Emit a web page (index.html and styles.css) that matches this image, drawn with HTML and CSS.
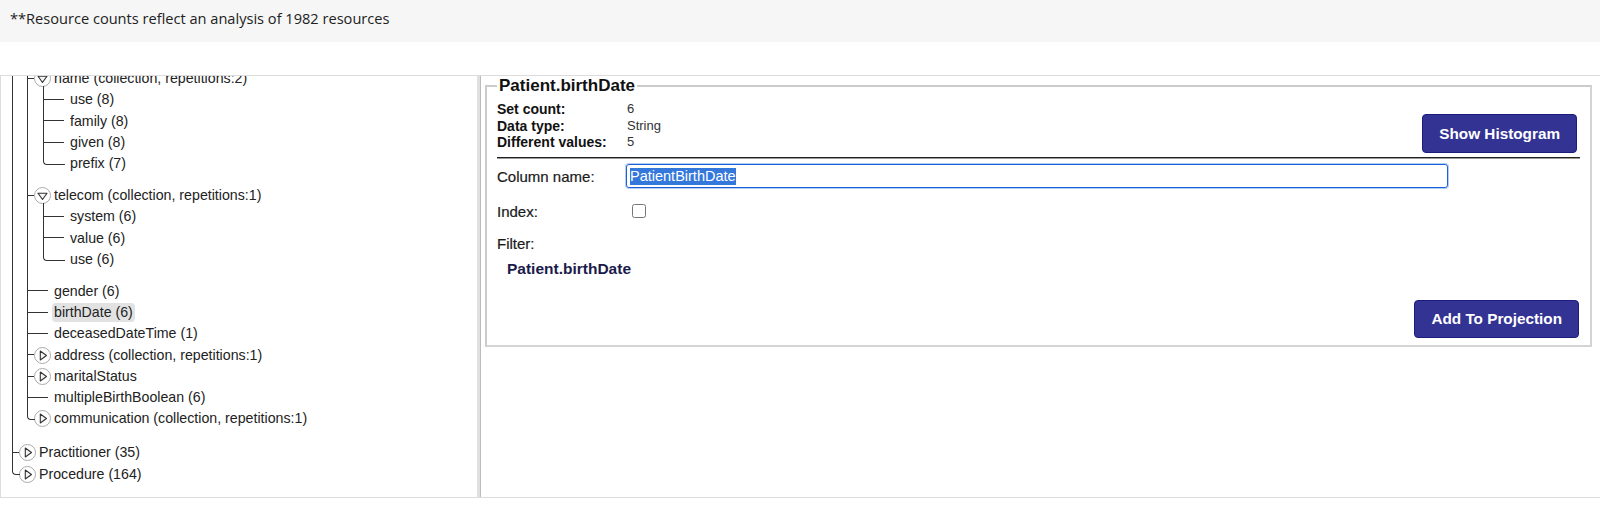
FILE: index.html
```html
<!DOCTYPE html>
<html lang="en">
<head>
<meta charset="utf-8">
<title>Resource analysis</title>
<link rel="stylesheet" href="styles.css">
</head>
<body>
<div class="notice">**Resource counts reflect an analysis of 1982 resources</div>
<div class="workspace">
  <div class="tree-pane">
    <ul class="tree">
      <li class="node hidden-row">
        <ul class="children l1">
          <li class="node open">
            <div class="row"><svg class="toggle" viewBox="0 0 17 17" width="17" height="17"><circle cx="8.5" cy="8.5" r="8" fill="#fff" stroke="#aaa"/><polygon points="4,6.2 13,6.2 8.5,12.5" fill="#f4f4f4" stroke="#333" stroke-width="1.1" stroke-linejoin="round"/></svg><span class="label">name (collection, repetitions:2)</span></div>
            <ul class="children l2">
              <li class="leaf"><div class="row"><span class="label">use (8)</span></div></li>
              <li class="leaf"><div class="row"><span class="label">family (8)</span></div></li>
              <li class="leaf"><div class="row"><span class="label">given (8)</span></div></li>
              <li class="leaf last"><div class="row"><span class="label">prefix (7)</span></div></li>
            </ul>
          </li>
          <li class="node open">
            <div class="row"><svg class="toggle" viewBox="0 0 17 17" width="17" height="17"><circle cx="8.5" cy="8.5" r="8" fill="#fff" stroke="#aaa"/><polygon points="4,6.2 13,6.2 8.5,12.5" fill="#f4f4f4" stroke="#333" stroke-width="1.1" stroke-linejoin="round"/></svg><span class="label">telecom (collection, repetitions:1)</span></div>
            <ul class="children l2">
              <li class="leaf"><div class="row"><span class="label">system (6)</span></div></li>
              <li class="leaf"><div class="row"><span class="label">value (6)</span></div></li>
              <li class="leaf last"><div class="row"><span class="label">use (6)</span></div></li>
            </ul>
          </li>
          <li class="leaf"><div class="row"><span class="label">gender (6)</span></div></li>
          <li class="leaf"><div class="row"><span class="label selected">birthDate (6)</span></div></li>
          <li class="leaf"><div class="row"><span class="label">deceasedDateTime (1)</span></div></li>
          <li class="node"><div class="row"><svg class="toggle" viewBox="0 0 17 17" width="17" height="17"><circle cx="8.5" cy="8.5" r="8" fill="#fff" stroke="#aaa"/><polygon points="6.3,4 12.5,8.5 6.3,13" fill="#f4f4f4" stroke="#333" stroke-width="1.1" stroke-linejoin="round"/></svg><span class="label">address (collection, repetitions:1)</span></div></li>
          <li class="node"><div class="row"><svg class="toggle" viewBox="0 0 17 17" width="17" height="17"><circle cx="8.5" cy="8.5" r="8" fill="#fff" stroke="#aaa"/><polygon points="6.3,4 12.5,8.5 6.3,13" fill="#f4f4f4" stroke="#333" stroke-width="1.1" stroke-linejoin="round"/></svg><span class="label">maritalStatus</span></div></li>
          <li class="leaf"><div class="row"><span class="label">multipleBirthBoolean (6)</span></div></li>
          <li class="node last"><div class="row"><svg class="toggle" viewBox="0 0 17 17" width="17" height="17"><circle cx="8.5" cy="8.5" r="8" fill="#fff" stroke="#aaa"/><polygon points="6.3,4 12.5,8.5 6.3,13" fill="#f4f4f4" stroke="#333" stroke-width="1.1" stroke-linejoin="round"/></svg><span class="label">communication (collection, repetitions:1)</span></div></li>
        </ul>
      </li>
      <li class="node"><div class="row"><svg class="toggle" viewBox="0 0 17 17" width="17" height="17"><circle cx="8.5" cy="8.5" r="8" fill="#fff" stroke="#aaa"/><polygon points="6.3,4 12.5,8.5 6.3,13" fill="#f4f4f4" stroke="#333" stroke-width="1.1" stroke-linejoin="round"/></svg><span class="label">Practitioner (35)</span></div></li>
      <li class="node last"><div class="row"><svg class="toggle" viewBox="0 0 17 17" width="17" height="17"><circle cx="8.5" cy="8.5" r="8" fill="#fff" stroke="#aaa"/><polygon points="6.3,4 12.5,8.5 6.3,13" fill="#f4f4f4" stroke="#333" stroke-width="1.1" stroke-linejoin="round"/></svg><span class="label">Procedure (164)</span></div></li>
    </ul>
  </div>
  <div class="splitter"></div>
  <div class="detail-pane">
    <fieldset class="detail">
      <legend class="detail-title">Patient.birthDate</legend>
      <div class="summary">
        <dl class="stats">
          <dt>Set count:</dt><dd>6</dd>
          <dt>Data type:</dt><dd>String</dd>
          <dt>Different values:</dt><dd>5</dd>
        </dl>
        <button class="btn btn-histogram" type="button">Show Histogram</button>
      </div>
      <hr class="divider">
      <div class="field field-name">
        <span class="field-label">Column name:</span>
        <div class="text-input"><span class="text-selection">PatientBirthDate</span></div>
      </div>
      <div class="field field-index">
        <span class="field-label">Index:</span>
        <input class="checkbox" type="checkbox">
      </div>
      <div class="field field-filter">
        <span class="field-label">Filter:</span>
      </div>
      <div class="filter-value">Patient.birthDate</div>
      <div class="actions">
        <button class="btn btn-add" type="button">Add To Projection</button>
      </div>
    </fieldset>
  </div>
</div>
</body>
</html>
```

FILE: styles.css
```css
* { box-sizing: border-box; }

html, body {
  margin: 0;
  padding: 0;
  background: #fff;
  height: 505px;
  overflow: hidden;
}

body {
  font-family: "Liberation Sans", Arial, sans-serif;
  color: #222;
}

.notice {
  height: 42px;
  background: #f6f6f6;
  padding: 8px 0 0 10px;
  font-family: "Open Sans", "Liberation Sans", sans-serif;
  font-size: 14.6px;
  line-height: 20px;
  color: #222;
}

.workspace {
  margin-top: 33px;
  height: 423px;
  display: flex;
  border-top: 1px solid #dcdcdc;
  border-bottom: 1px solid #dcdcdc;
}

/* ---------- tree ---------- */
.tree-pane {
  width: 477px;
  flex: none;
  border-left: 1px solid #dcdcdc;
  overflow: hidden;
  font-size: 14.2px;
  color: #222;
}

.tree,
.children {
  list-style: none;
  margin: 0;
  padding: 0;
}

.tree {
  padding-left: 11px;
  margin-top: -8.2px;
}

.children.l1 {
  padding-left: 15px;
  padding-bottom: 12.5px;
}

.children.l2 {
  padding-left: 16px;
  padding-bottom: 10.5px;
}

.tree li {
  position: relative;
}

.tree li::before {
  content: "";
  position: absolute;
  left: 0;
  top: 0;
  bottom: 0;
  border-left: 1px solid #333;
}

.tree li::after {
  content: "";
  position: absolute;
  left: 0;
  top: 10px;
  width: 7px;
  border-top: 1px solid #333;
}

.tree li.leaf::after {
  width: 21px;
}

.children.l2 > li:first-child::before {
  top: -3px;
}

.tree li.last::before {
  bottom: auto;
  height: 11px;
  width: 7px;
  border-bottom: 1px solid #333;
  border-bottom-left-radius: 4px;
}

.tree li.leaf.last::before {
  width: 21px;
}

.tree li.last::after,
.tree li.hidden-row::after {
  display: none;
}

.row {
  height: 21.3px;
  display: flex;
  align-items: center;
  white-space: nowrap;
}

.node > .row {
  padding-left: 7px;
}

.leaf > .row {
  padding-left: 27px;
}

.toggle {
  flex: none;
  display: block;
  margin-right: 3px;
}

.label {
  display: inline-block;
  line-height: 19px;
  padding: 0 2px;
  margin-left: -2px;
  border-radius: 4px;
}

.label.selected {
  background: #e2e2e2;
}

/* ---------- splitter ---------- */
.splitter {
  width: 4px;
  flex: none;
  background: #e0e0e0;
  border-right: 1px solid #bcbcbc;
}

/* ---------- detail ---------- */
.detail-pane {
  flex: 1;
  padding: 0 8px 0 4px;
}

.detail {
  margin: 0;
  border: 2px solid #d4d4d4;
  border-top-color: #cbcbcb;
  border-left-color: #cbcbcb;
  padding: 5px 10px 7px 10px;
}

.detail-title {
  font-size: 17px;
  font-weight: bold;
  line-height: 20px;
  padding: 0 2px;
  color: #111;
}

.summary {
  display: flex;
  justify-content: space-between;
  align-items: flex-start;
}

.stats {
  margin: 0;
  display: grid;
  grid-template-columns: 130px auto;
  line-height: 16.5px;
}

.stats dt {
  font-size: 14px;
  font-weight: bold;
  color: #111;
}

.stats dd {
  margin: 0;
  font-size: 13px;
  color: #333;
}

.btn {
  font-family: "Liberation Sans", Arial, sans-serif;
  font-size: 15.3px;
  font-weight: bold;
  color: #fff;
  background: #333394;
  border: 1px solid #1c1c7c;
  border-radius: 4px;
  padding: 0 16px;
}

.btn-histogram {
  height: 39px;
  margin-top: 13px;
  margin-right: 3px;
}

.divider {
  margin: 4px 0 0;
  height: 0;
  border: 0;
  border-top: 1px solid #222;
  border-bottom: 1px solid #9a9a9a;
}

.field {
  display: grid;
  grid-template-columns: 129px auto;
  align-items: center;
}

.field-label {
  font-size: 15px;
  color: #1a1a1a;
  -webkit-text-stroke: 0.2px #1a1a1a;
}

.field-name {
  margin-top: 5px;
  height: 24px;
}

.text-input {
  width: 822px;
  height: 24px;
  border: 1px solid #1d5fd6;
  border-radius: 3px;
  box-shadow: 0 0 0 1px #b3cdf6;
  padding: 0 0 0 3px;
  display: flex;
  align-items: center;
  font-size: 14.5px;
}

.text-selection {
  background: #3478dc;
  color: #fff;
  line-height: 17px;
}

.field-index {
  margin-top: 11px;
  height: 24px;
}

.checkbox {
  width: 14px;
  height: 14px;
  margin: 0 0 0 6px;
}

.field-filter {
  margin-top: 12px;
  line-height: 18px;
}

.filter-value {
  margin-top: 7px;
  padding-left: 10px;
  line-height: 18px;
  font-size: 15.5px;
  font-weight: bold;
  color: #1b1b4b;
}

.actions {
  margin-top: 22px;
  display: flex;
  justify-content: flex-end;
}

.btn-add {
  height: 38px;
  margin-right: 1px;
}
```
